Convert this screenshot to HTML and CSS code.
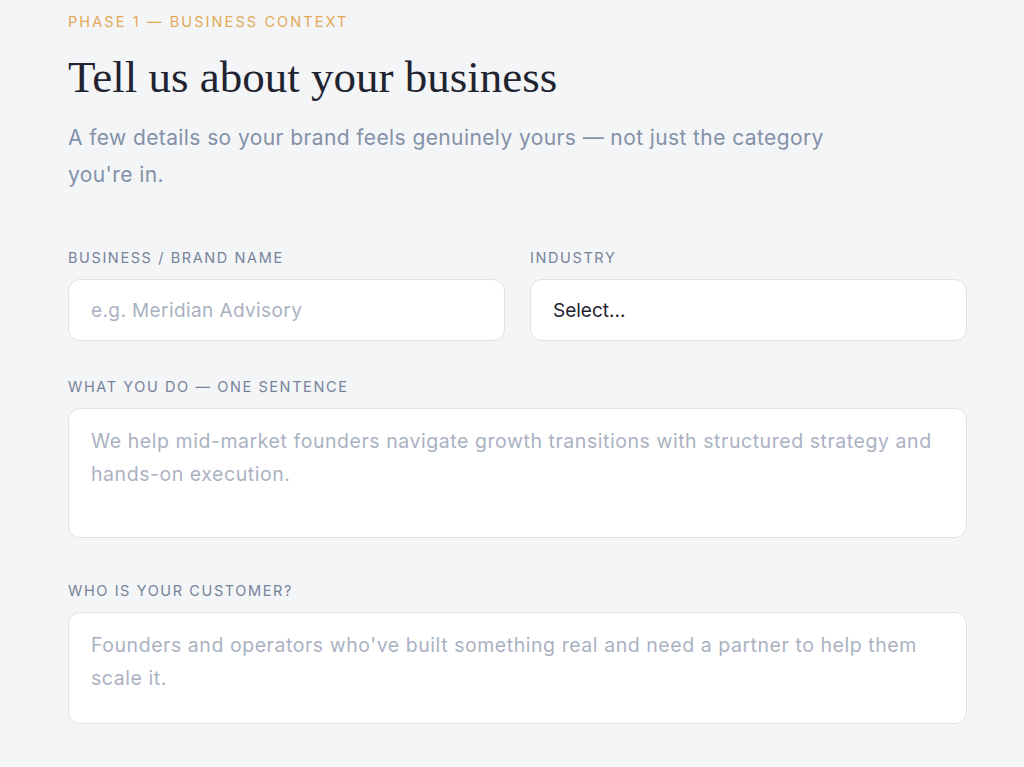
FILE: index.html
```html
<!DOCTYPE html>
<html lang="en">
<head>
    <meta charset="UTF-8">
    <meta name="viewport" content="width=device-width, initial-scale=1.0">
    <title>Business Context</title>
    <link rel="stylesheet" href="styles.css">
</head>
<body>
    <div class="page">
        <div class="eyebrow">Phase 1 — Business Context</div>
        <h1 class="title">Tell us about your business</h1>
        <p class="intro">A few details so your brand feels genuinely yours — not just the category you're in.</p>

        <form class="form">
            <div class="row">
                <div class="field">
                    <label class="label" for="brand">Business / Brand Name</label>
                    <input class="input" id="brand" type="text" placeholder="e.g. Meridian Advisory">
                </div>
                <div class="field">
                    <label class="label" for="industry">Industry</label>
                    <select class="input select" id="industry">
                        <option>Select...</option>
                    </select>
                </div>
            </div>

            <div class="field">
                <label class="label" for="what">What you do — one sentence</label>
                <textarea class="input textarea tall" id="what" placeholder="We help mid-market founders navigate growth transitions with structured strategy and hands-on execution."></textarea>
            </div>

            <div class="field">
                <label class="label" for="customer">Who is your customer?</label>
                <textarea class="input textarea" id="customer" placeholder="Founders and operators who've built something real and need a partner to help them scale it."></textarea>
            </div>
        </form>
    </div>
</body>
</html>
```

FILE: styles.css
```css
:root {
    --bg: #f4f5f7;
    --accent: #e3a959;
    --ink: #1f2430;
    --muted: #8391a8;
    --label: #77839a;
    --placeholder: #aab2c2;
    --border: #dfe2e7;
}

* {
    margin: 0;
    padding: 0;
    box-sizing: border-box;
}

body {
    background: var(--bg);
    font-family: 'Inter', 'Liberation Sans', sans-serif;
    color: var(--ink);
}

.page {
    width: 899px;
    margin-left: 68px;
    padding-top: 12px;
}

.eyebrow {
    font-size: 14.5px;
    letter-spacing: 2.1px;
    text-transform: uppercase;
    color: var(--accent);
    line-height: 20px;
}

.title {
    font-family: 'Liberation Serif', serif;
    font-weight: 400;
    font-size: 45px;
    line-height: 56px;
    margin-top: 17px;
    color: var(--ink);
}

.intro {
    font-size: 21px;
    letter-spacing: 0.4px;
    line-height: 37px;
    color: var(--muted);
    max-width: 780px;
    margin-top: 14px;
}

.form {
    margin-top: 55px;
}

.row {
    display: grid;
    grid-template-columns: 1fr 1fr;
    gap: 25px;
}

.field {
    display: flex;
    flex-direction: column;
    margin-bottom: 43px;
}

.row .field {
    margin-bottom: 36px;
}

.label {
    font-size: 14.5px;
    letter-spacing: 1.6px;
    text-transform: uppercase;
    color: var(--label);
    line-height: 20px;
    margin-bottom: 11px;
}

.input {
    width: 100%;
    height: 62px;
    border: 1px solid var(--border);
    border-radius: 12px;
    background: #fff;
    padding: 0 22px;
    font-family: inherit;
    font-size: 19px;
    letter-spacing: 0.4px;
    color: var(--ink);
    outline: none;
}

.input::placeholder {
    color: var(--placeholder);
}

.select {
    appearance: none;
    -webkit-appearance: none;
    letter-spacing: 0;
}

.textarea {
    height: 112px;
    padding: 16px 22px;
    font-size: 19.5px;
    letter-spacing: 0.55px;
    line-height: 33px;
    resize: none;
    display: block;
}

.textarea.tall {
    height: 130px;
}
```
